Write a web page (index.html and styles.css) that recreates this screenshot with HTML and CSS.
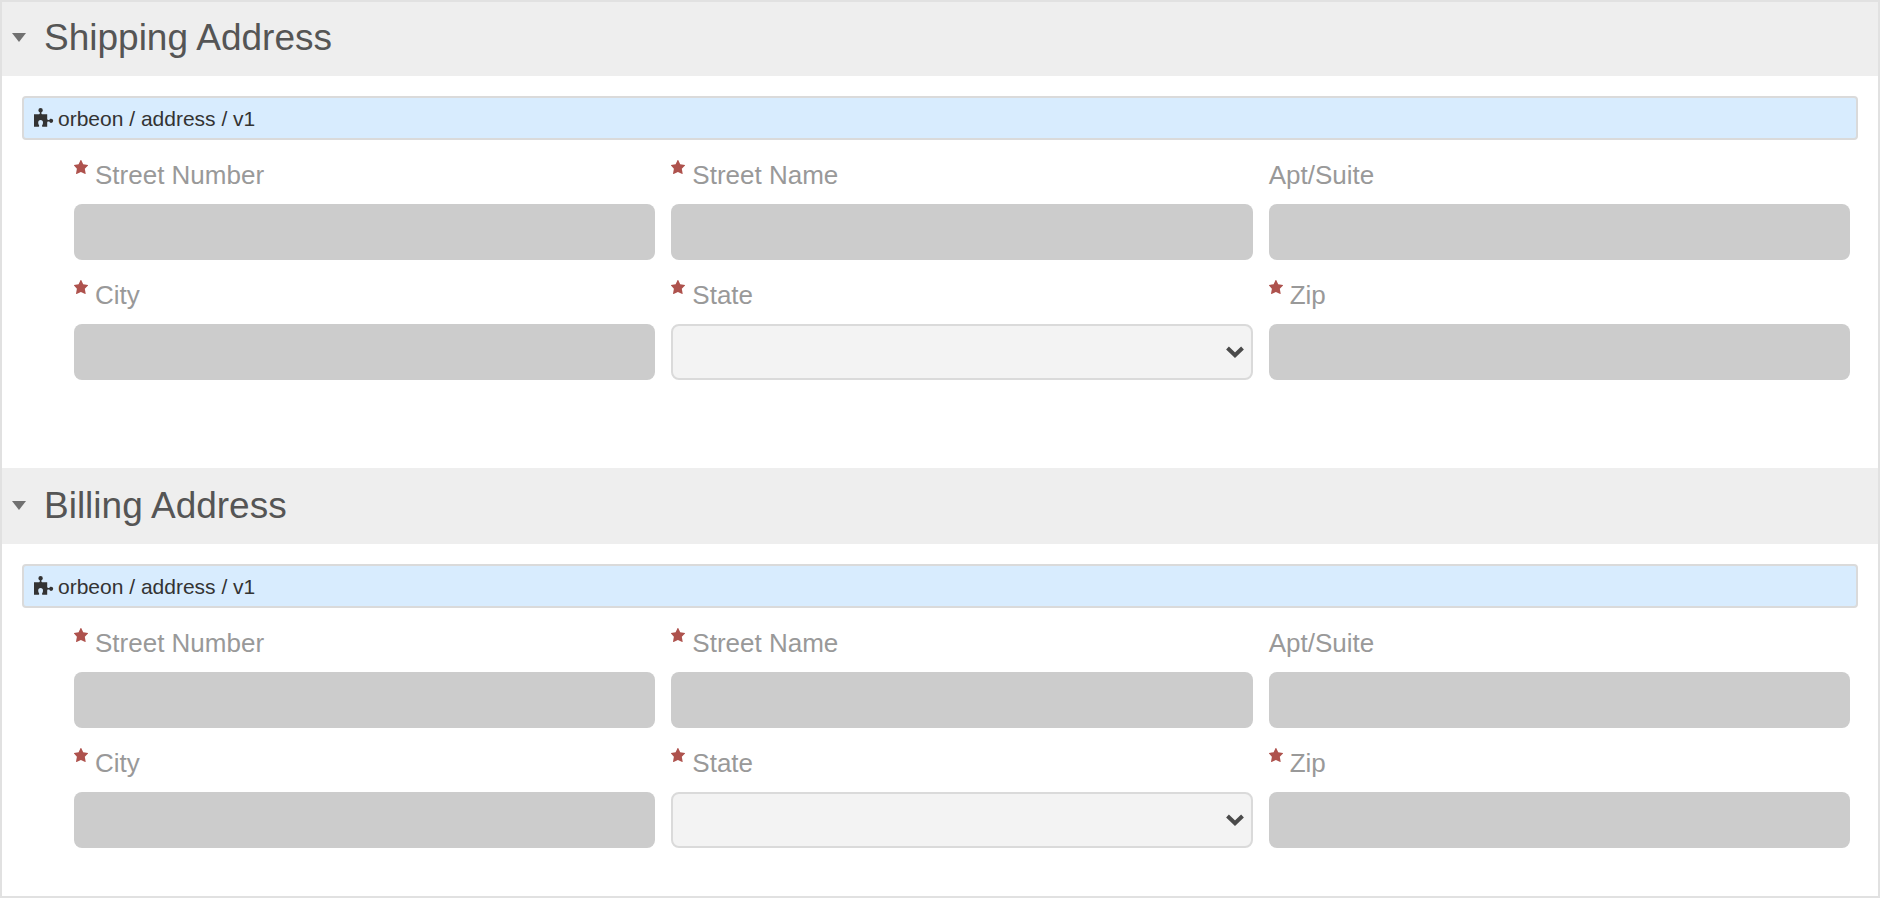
FILE: index.html
```html
<!DOCTYPE html>
<html lang="en">
<head>
<meta charset="utf-8">
<title>Address form</title>
<link rel="stylesheet" href="styles.css">
</head>
<body>
<svg class="sprite" aria-hidden="true">
  <symbol id="star" viewBox="0 0 14 14"><path d="M6.6 0H7.2L9.2 4.2 14 4.9V5.4L10.8 8.7 11.7 13.8 11.2 14 6.9 12 2.6 14 2 13.8 2.9 8.7 0 5.6V4.9L4.6 4.2Z"/></symbol>
  <symbol id="puzzle" viewBox="0 0 20 20"><path d="M0 6.2H4.6C5.4 6.2 5.8 5.8 5.8 5.2V4.2C5 3.8 4.4 3.2 4.4 2.2A2.2 2.2 0 0 1 8.8 2.2C8.8 3.2 8.2 3.8 7.4 4.2V5.2C7.4 5.8 7.8 6.2 8.6 6.2H13.2V10.8C13.2 11.5 13.6 12 14.2 12H15.3C15.6 11.2 16.2 10.7 17.1 10.7A2.1 2.1 0 0 1 17.1 14.9C16.2 14.9 15.6 14.4 15.3 13.6H14.2C13.6 13.6 13.2 14 13.2 14.7V18.7H8.6C8.2 18.7 8 18.4 8 18C8 17.2 9 16.4 9 14.8A2.4 2.8 0 0 0 4.2 14.8C4.2 16.4 5.2 17.2 5.2 18C5.2 18.4 5 18.7 4.6 18.7H0Z"/></symbol>
  <symbol id="chevron" viewBox="0 0 18 12"><path d="M1.5 2 9 9.2 16.5 2" fill="none" stroke="currentColor" stroke-width="4"/></symbol>
  <symbol id="caret" viewBox="0 0 14 9"><path d="M0 0H14L7 9Z"/></symbol>
</svg>
<main class="form">
  <section class="section">
    <header class="section-header">
      <button class="toggle" type="button" aria-label="Collapse Shipping Address"><svg class="caret"><use href="#caret"/></svg></button>
      <h2 class="title">Shipping Address</h2>
    </header>
    <div class="section-body">
      <div class="component"><svg class="puzzle"><use href="#puzzle"/></svg><span>orbeon / address / v1</span></div>
      <div class="fields">
        <div class="field"><label class="label" for="s-number"><svg class="star"><use href="#star"/></svg>Street Number</label><input class="input" id="s-number" type="text" disabled></div>
        <div class="field"><label class="label" for="s-name"><svg class="star"><use href="#star"/></svg>Street Name</label><input class="input" id="s-name" type="text" disabled></div>
        <div class="field"><label class="label" for="s-apt">Apt/Suite</label><input class="input" id="s-apt" type="text" disabled></div>
        <div class="field"><label class="label" for="s-city"><svg class="star"><use href="#star"/></svg>City</label><input class="input" id="s-city" type="text" disabled></div>
        <div class="field"><label class="label" for="s-state"><svg class="star"><use href="#star"/></svg>State</label><div class="select-wrap"><select class="select" id="s-state" disabled><option></option></select><svg class="chevron"><use href="#chevron"/></svg></div></div>
        <div class="field"><label class="label" for="s-zip"><svg class="star"><use href="#star"/></svg>Zip</label><input class="input" id="s-zip" type="text" disabled></div>
      </div>
    </div>
  </section>
  <section class="section">
    <header class="section-header">
      <button class="toggle" type="button" aria-label="Collapse Billing Address"><svg class="caret"><use href="#caret"/></svg></button>
      <h2 class="title">Billing Address</h2>
    </header>
    <div class="section-body">
      <div class="component"><svg class="puzzle"><use href="#puzzle"/></svg><span>orbeon / address / v1</span></div>
      <div class="fields">
        <div class="field"><label class="label" for="b-number"><svg class="star"><use href="#star"/></svg>Street Number</label><input class="input" id="b-number" type="text" disabled></div>
        <div class="field"><label class="label" for="b-name"><svg class="star"><use href="#star"/></svg>Street Name</label><input class="input" id="b-name" type="text" disabled></div>
        <div class="field"><label class="label" for="b-apt">Apt/Suite</label><input class="input" id="b-apt" type="text" disabled></div>
        <div class="field"><label class="label" for="b-city"><svg class="star"><use href="#star"/></svg>City</label><input class="input" id="b-city" type="text" disabled></div>
        <div class="field"><label class="label" for="b-state"><svg class="star"><use href="#star"/></svg>State</label><div class="select-wrap"><select class="select" id="b-state" disabled><option></option></select><svg class="chevron"><use href="#chevron"/></svg></div></div>
        <div class="field"><label class="label" for="b-zip"><svg class="star"><use href="#star"/></svg>Zip</label><input class="input" id="b-zip" type="text" disabled></div>
      </div>
    </div>
  </section>
</main>
</body>
</html>
```
FILE: styles.css
```css
* { box-sizing: border-box; }

body {
  margin: 0;
  background: #fff;
  color: #333;
  font-family: "Liberation Sans", Arial, sans-serif;
}

.sprite { position: absolute; width: 0; height: 0; }

.form {
  display: flex;
  flex-direction: column;
  gap: 40px;
  border: 2px solid #e1e1e1;
}

.section-header {
  display: flex;
  align-items: center;
  gap: 18px;
  padding: 18px 10px;
  background: #eee;
}

.section:first-child .section-header { padding-top: 16px; }

.toggle {
  display: flex;
  padding: 0 0 2px;
  border: 0;
  background: none;
}

.caret { width: 14px; height: 9px; fill: #707070; }

.title {
  margin: 0;
  color: #555;
  font-size: 37px;
  font-weight: 400;
  line-height: 40px;
}

.section-body { padding: 20px 20px 48px; }

.component {
  display: flex;
  align-items: center;
  gap: 4px;
  padding: 9px 10px 7px;
  border: 2px solid #dadada;
  border-radius: 4px;
  background: #d8ecfe;
  font-size: 21px;
  line-height: 24px;
}

.puzzle { width: 20px; height: 20px; margin-bottom: 2px; fill: #333; }

.fields {
  display: grid;
  grid-template-columns: repeat(3, 1fr);
  gap: 0 16px;
  padding: 0 8px 0 52px;
}

.field { display: flex; flex-direction: column; }

.label {
  display: flex;
  gap: 7px;
  padding: 20px 0 14px;
  color: #999;
  font-size: 26px;
  line-height: 30px;
}

.star { width: 14px; height: 14px; fill: #ae524d; }

.input {
  width: 100%;
  height: 56px;
  border: 0;
  border-radius: 8px;
  background: #ccc;
}

.select-wrap { position: relative; display: flex; }

.select {
  width: 100%;
  height: 56px;
  appearance: none;
  border: 2px solid #dadada;
  border-radius: 8px;
  background: #f3f3f3;
  opacity: 1;
}

.chevron {
  position: absolute;
  top: 22px;
  right: 9px;
  width: 18px;
  height: 12px;
  color: #4a4a4a;
  pointer-events: none;
}
```
